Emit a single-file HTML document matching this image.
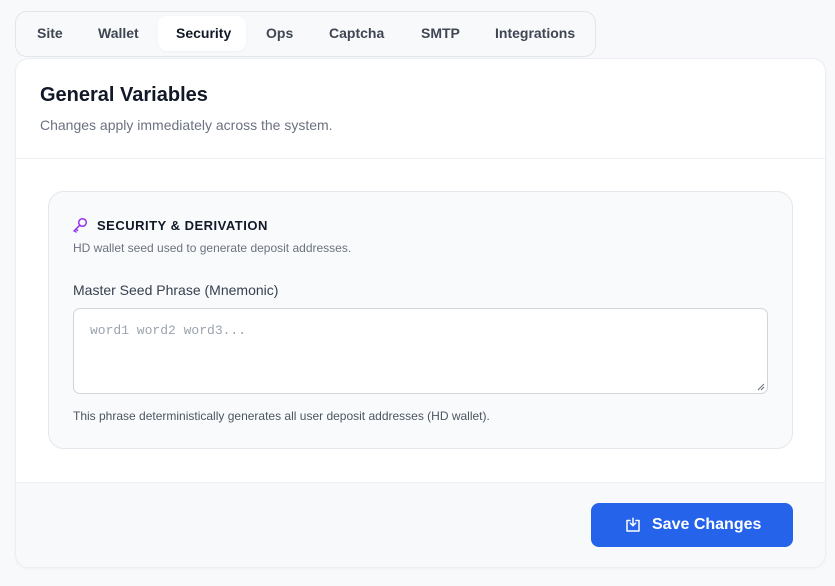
<!DOCTYPE html>
<html><head><style>
*{box-sizing:border-box;margin:0;padding:0}
body{width:835px;height:586px;background:#f8f9fb;font-family:"Liberation Sans",Arial,sans-serif;position:relative;overflow:hidden}
.tabs{position:absolute;left:15px;top:11px;width:581px;height:46px;border:1px solid #e2e5ea;border-radius:12px;background:#f8f9fb}
.tab{position:absolute;top:16px;font-size:14px;font-weight:bold;color:#3f4653;line-height:35px}
.active{position:absolute;left:158px;top:16px;width:88px;height:35px;background:#fff;border-radius:9px;box-shadow:0 1px 2px rgba(0,0,0,.04)}
.card{position:absolute;left:15px;top:58px;width:811px;height:510px;background:#fff;border:1px solid #eceef1;border-radius:14px;overflow:hidden;box-shadow:0 1px 3px rgba(0,0,0,.04)}
h1{position:absolute;left:24px;top:25px;font-size:20px;font-weight:bold;color:#111827}
.sub{position:absolute;left:24px;top:58px;font-size:14px;color:#6b7280}
.hr{position:absolute;left:0;top:99px;width:100%;height:1px;background:#eef0f3}
.sec{position:absolute;left:32px;top:132px;width:745px;height:258px;background:#f9fafb;border:1px solid #e4e7eb;border-radius:16px}
.st{position:absolute;left:48px;top:26px;font-size:13px;font-weight:bold;letter-spacing:.5px;color:#111827}
.sd{position:absolute;left:24px;top:49px;font-size:12px;color:#6b7280}
.lb{position:absolute;left:24px;top:90px;font-size:14px;color:#374151}
.ta{position:absolute;left:24px;top:116px;width:695px;height:86px;background:#fff;border:1px solid #d1d5db;border-radius:7px;font-family:"Liberation Mono",monospace;font-size:13px;color:#9ca3af;padding:14px 16px}
.hint{position:absolute;left:24px;top:217px;font-size:12px;color:#4b5563}
.foot{position:absolute;left:0;top:423px;width:100%;height:87px;background:#f8f9fb;border-top:1px solid #eef0f3}
.btn{position:absolute;left:575px;top:20px;width:202px;height:44px;background:#2563eb;border-radius:8px;color:#fff;font-size:16px;font-weight:bold;line-height:43px;padding-left:61px}
</style></head><body>
<div class="tabs"></div>
<div class="active"></div>
<div class="tab" style="left:37px">Site</div>
<div class="tab" style="left:98px">Wallet</div>
<div class="tab" style="left:176px;color:#111827">Security</div>
<div class="tab" style="left:266px">Ops</div>
<div class="tab" style="left:329px">Captcha</div>
<div class="tab" style="left:421px">SMTP</div>
<div class="tab" style="left:495px">Integrations</div>
<div class="card">
<h1>General Variables</h1>
<div class="sub">Changes apply immediately across the system.</div>
<div class="hr"></div>
<div class="sec">
<svg style="position:absolute;left:23px;top:25px" width="16" height="16" viewBox="0 0 16 16" fill="none" stroke="#9333ea" stroke-width="1.5" stroke-linecap="round" stroke-linejoin="round"><circle cx="10.5" cy="5.5" r="3.8"/><path d="M7.8 8.2L2 14M4 12l1.5 1.5M2.5 13.5L4 15"/></svg>
<div class="st">SECURITY &amp; DERIVATION</div>
<div class="sd">HD wallet seed used to generate deposit addresses.</div>
<div class="lb">Master Seed Phrase (Mnemonic)</div>
<div class="ta">word1 word2 word3...
<svg style="position:absolute;right:2px;bottom:2px" width="8" height="8" viewBox="0 0 8 8" stroke="#6b7280" stroke-width="1"><path d="M7 1L1 7M7 4L4 7"/></svg></div>
<div class="hint">This phrase deterministically generates all user deposit addresses (HD wallet).</div>
</div>
<div class="foot">
<div class="btn">
<svg style="position:absolute;left:33px;top:13px" width="18" height="18" viewBox="0 0 24 24" fill="none" stroke="#fff" stroke-width="2" stroke-linecap="round" stroke-linejoin="round"><path d="M8 6H4v14h16V6h-4"/><path d="M12 3v10M8.5 9.5L12 13l3.5-3.5"/></svg>
Save Changes</div>
</div>
</div>
</body></html>
